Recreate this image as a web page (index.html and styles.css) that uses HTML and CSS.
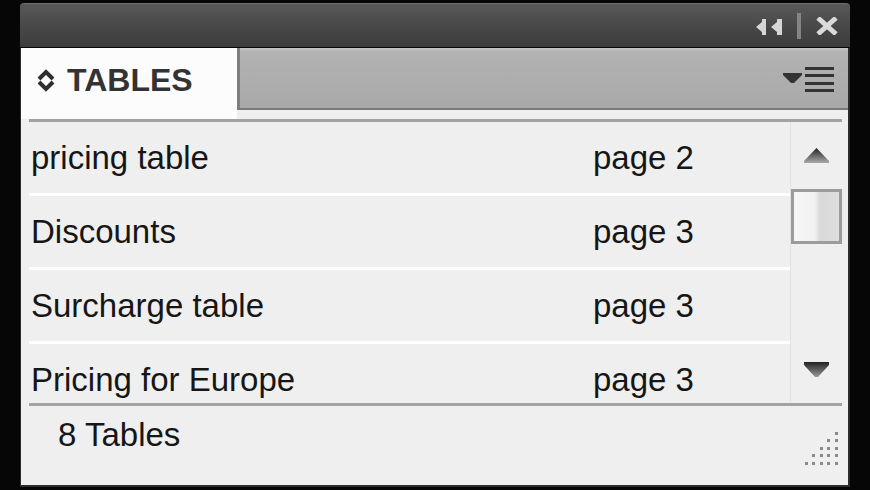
FILE: index.html
```html
<!DOCTYPE html>
<html lang="en">
<head>
<meta charset="utf-8">
<title>Tables panel</title>
<link rel="stylesheet" href="styles.css">
</head>
<body>
<div class="panel">
  <div class="titlebar">
    <svg class="collapse" width="27" height="18" viewBox="0 0 27 18">
      <polygon points="0,9 6,4 6,1 10,1 10,17 6,17 6,14" fill="#d6d6d6"/>
      <polygon points="15,9 21,4 21,1 26,1 26,17 21,17 21,14" fill="#d6d6d6"/>
    </svg>
    <span class="tsep"></span>
    <svg class="close" width="22" height="18" viewBox="0 0 22 18">
      <path d="M2 1 L20 17 M20 1 L2 17" stroke="#dadada" stroke-width="5" fill="none"/>
    </svg>
  </div>
  <div class="tabrow">
    <div class="tab">
      <svg class="sort-icon" width="18" height="23" viewBox="0 0 18 23">
        <polyline points="2,10 9,3 16,10" stroke="#2e2e2e" stroke-width="4" fill="none"/>
        <polyline points="2,13 9,20 16,13" stroke="#2e2e2e" stroke-width="4" fill="none"/>
      </svg>
      <span class="tab-label">TABLES</span>
    </div>
    <div class="tabfill">
      <svg class="menu-icon" width="51" height="25" viewBox="0 0 51 25">
        <polygon points="0,6 19,6 19,8 11,16 8,16 0,8" fill="#333"/>
        <rect x="22" y="0" width="29" height="3" fill="#333"/>
        <rect x="22" y="7" width="29" height="3" fill="#333"/>
        <rect x="22" y="15" width="29" height="3" fill="#333"/>
        <rect x="22" y="22" width="29" height="3" fill="#333"/>
      </svg>
    </div>
  </div>
  <div class="body">
    <div class="list">
      <div class="rows">
        <div class="row"><span class="name">pricing table</span><span class="page">page 2</span></div>
        <div class="row"><span class="name">Discounts</span><span class="page">page 3</span></div>
        <div class="row"><span class="name">Surcharge table</span><span class="page">page 3</span></div>
        <div class="row"><span class="name">Pricing for Europe</span><span class="page">page 3</span></div>
      </div>
      <div class="scrollbar">
        <svg class="arrow-up" width="25" height="15" viewBox="0 0 25 15">
          <defs>
            <linearGradient id="gu" x1="0" y1="0" x2="0" y2="1">
              <stop offset="0" stop-color="#222"/>
              <stop offset="1" stop-color="#aaa"/>
            </linearGradient>
          </defs>
          <polygon points="12.5,0 25,13 25,15 0,15 0,13" fill="url(#gu)"/>
        </svg>
        <div class="thumb"></div>
        <svg class="arrow-down" width="25" height="15" viewBox="0 0 25 15">
          <defs>
            <linearGradient id="gd" x1="0" y1="0" x2="0" y2="1">
              <stop offset="0" stop-color="#222"/>
              <stop offset="1" stop-color="#999"/>
            </linearGradient>
          </defs>
          <polygon points="0,0 25,0 25,3 14,15 11,15 0,3" fill="url(#gd)"/>
        </svg>
      </div>
    </div>
    <div class="footer">
      <span class="count">8 Tables</span>
      <svg class="grip" width="33" height="33" viewBox="0 0 33 33">
        <g fill="#8a8a8a">
          <rect x="30" y="0" width="3" height="3"/>
          <rect x="22" y="7" width="3" height="3"/><rect x="30" y="7" width="3" height="3"/>
          <rect x="15" y="15" width="3" height="3"/><rect x="22" y="15" width="3" height="3"/><rect x="30" y="15" width="3" height="3"/>
          <rect x="7" y="22" width="3" height="3"/><rect x="15" y="22" width="3" height="3"/><rect x="22" y="22" width="3" height="3"/><rect x="30" y="22" width="3" height="3"/>
          <rect x="0" y="30" width="3" height="3"/><rect x="7" y="30" width="3" height="3"/><rect x="15" y="30" width="3" height="3"/><rect x="22" y="30" width="3" height="3"/><rect x="30" y="30" width="3" height="3"/>
        </g>
      </svg>
    </div>
  </div>
</div>
</body>
</html>
```

FILE: styles.css
```css
html, body {
  margin: 0;
  padding: 0;
  background: #060606;
  width: 870px;
  height: 490px;
  overflow: hidden;
}

.panel {
  margin: 3px 0 0 20px;
  width: 830px;
  height: 484px;
  display: flex;
  flex-direction: column;
  font-family: "Liberation Sans", Arial, sans-serif;
}

.titlebar {
  height: 44px;
  flex: none;
  box-sizing: border-box;
  border-radius: 4px 4px 0 0;
  border-top: 1px solid #6c6c6c;
  background: linear-gradient(#595959, #4a4a4a 45%, #3c3c3c);
  display: flex;
  justify-content: flex-end;
  align-items: center;
  padding-right: 12px;
}

.collapse {
  display: block;
  margin-top: 2px;
}

.tsep {
  display: block;
  width: 4px;
  height: 26px;
  margin-left: 14px;
  background: #858585;
}

.close {
  display: block;
  margin-left: 15px;
}

.tabrow {
  margin-top: 1px;
  height: 62px;
  flex: none;
  display: flex;
  border-left: 1px solid #2c2c2c;
  border-right: 2px solid #2c2c2c;
}

.tab {
  width: 216px;
  flex: none;
  box-sizing: border-box;
  background: #fcfcfc;
  padding: 12px 0 0 16px;
  display: flex;
  align-items: flex-start;
}

.sort-icon {
  display: block;
  margin-top: 9px;
}

.tab-label {
  margin-left: 12px;
  font-size: 32px;
  line-height: 40px;
  font-weight: bold;
  color: #333;
}

.tabfill {
  flex: 1;
  box-sizing: border-box;
  border-left: 3px solid #7e7e7e;
  border-bottom: 2px solid #7a7a7a;
  background: linear-gradient(#c6c6c6 0, #b2b2b2 4px, #a9a9a9 100%);
  display: flex;
  justify-content: flex-end;
  align-items: flex-start;
  padding: 19px 14px 0 0;
}

.menu-icon {
  display: block;
}

.body {
  flex: 1;
  border-left: 1px solid #2c2c2c;
  border-right: 2px solid #2c2c2c;
  border-bottom: 2px solid #2c2c2c;
  background: linear-gradient(#fcfcfc, #fcfcfc) no-repeat 0 0 / 216px 9px, #efefef;
  padding: 9px 6px 0 8px;
  display: flex;
  flex-direction: column;
}

.list {
  height: 281px;
  flex: none;
  border-top: 3px solid #a2a2a2;
  border-bottom: 3px solid #a2a2a2;
  display: flex;
  overflow: hidden;
}

.rows {
  width: 761px;
  flex: none;
  overflow: hidden;
}

.row {
  height: 71px;
  border-bottom: 3px solid #ffffff;
  display: grid;
  grid-template-columns: 562px 1fr;
  padding-left: 2px;
  font-size: 33px;
  line-height: 71px;
  color: #161616;
  white-space: nowrap;
}

.scrollbar {
  flex: 1;
  border-left: 1px solid #e2e2e2;
  display: flex;
  flex-direction: column;
  align-items: center;
}

.arrow-up {
  display: block;
  margin-top: 26px;
}

.thumb {
  margin-top: 26px;
  width: 51px;
  height: 55px;
  box-sizing: border-box;
  border: 3px solid #9c9c9c;
  background: linear-gradient(to right, #f6f6f6 0, #f2f2f2 45%, #d9d9d9 58%, #dedede 100%);
}

.arrow-down {
  display: block;
  margin-top: auto;
  margin-bottom: 26px;
}

.footer {
  flex: 1;
  display: flex;
  align-items: flex-start;
  padding: 9px 4px 0 29px;
}

.count {
  font-size: 33px;
  line-height: 40px;
  color: #161616;
}

.grip {
  display: block;
  margin-left: auto;
  margin-top: 17px;
}
```
